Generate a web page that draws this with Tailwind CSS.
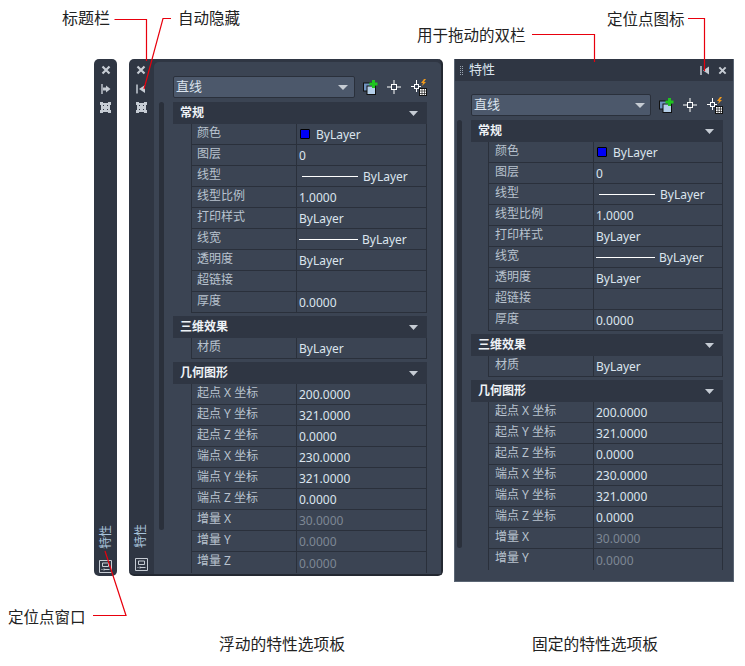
<!DOCTYPE html>
<html lang="zh">
<head>
<meta charset="utf-8">
<script src="https://cdn.jsdelivr.net/npm/@tailwindcss/browser@4"></script>
</head>
<body class="bg-white font-['Noto_Sans','Noto_Sans_CJK_SC',sans-serif]">
<div class="relative w-[745px] h-[666px] overflow-hidden">

<!-- callout labels -->
<div class="absolute left-[62px] top-[7px] text-[16px] leading-[22px] text-[#222]">标题栏</div>
<div class="absolute left-[178px] top-[7px] text-[15.5px] leading-[22px] text-[#222]">自动隐藏</div>
<div class="absolute left-[417px] top-[24px] text-[15.5px] leading-[22px] text-[#222]">用于拖动的双栏</div>
<div class="absolute left-[607px] top-[8px] text-[15.5px] leading-[22px] text-[#222]">定位点图标</div>
<div class="absolute left-[8px] top-[606px] text-[15.5px] leading-[22px] text-[#222]">定位点窗口</div>
<div class="absolute left-[219px] top-[633px] text-[15.75px] leading-[22px] text-[#222]">浮动的特性选项板</div>
<div class="absolute left-[532px] top-[633px] text-[15.75px] leading-[22px] text-[#222]">固定的特性选项板</div>

<!-- collapsed palette -->
<div class="absolute left-[94px] top-[59px] w-[23px] h-[517px] bg-[#2f3643] rounded-[5px] flex flex-col items-center pt-[6px] pb-[3px]">
  <svg class="w-[10px] h-[10px]" viewBox="0 0 10 10"><path d="M1.500 1.500l7 7M8.500 1.500l-7 7" stroke="#c6ccd4" stroke-width="2.200"/></svg>
  <svg class="w-[10px] h-[10px] mt-[9px]" viewBox="0 0 10 10"><path d="M1 0v10" stroke="#c6ccd4" stroke-width="1.400"/><path d="M2 3.500h3V1.500L9.500 5 5 8.500V6.500H2z" fill="#c6ccd4"/></svg>
  <svg class="w-[11px] h-[11px] mt-[8px]" viewBox="0 0 11 11"><path fill-rule="evenodd" d="M0 0h3v1h5V0h3v3h-1v5h1v3H8v-1H3v1H0V8h1V3H0zM3 3v1h1V3zM7 3v1h1V3zM3 7v1h1V7zM7 7v1h1V7z" fill="#c6ccd4"/></svg>
  <div class="flex-1"></div>
  <div class="[writing-mode:vertical-rl] [text-orientation:sideways] rotate-180 text-[12px] leading-[14px] text-[#a9c4dc]">特性</div>
  <svg class="w-[13px] h-[13px] mt-[11px]" viewBox="0 0 13 13"><path d="M.500.500h12v12H.500zM3.500 3h6v3.500h-6zM2.500 9.500h1M5 8.500v2M5 9.500h5.500" fill="none" stroke="#c6ccd4"/></svg>
</div>

<!-- floating palette -->
<div class="absolute left-[129px] top-[59px] w-[314px] h-[517px] bg-[#2f3643] rounded-[5px] flex border-r-2 border-b-2 border-[#232831]">
  <div class="w-[24px] flex flex-col items-center pt-[6px] pb-[3px] shrink-0">
    <svg class="w-[10px] h-[10px]" viewBox="0 0 10 10"><path d="M1.500 1.500l7 7M8.500 1.500l-7 7" stroke="#c6ccd4" stroke-width="2.200"/></svg>
    <svg class="w-[10px] h-[10px] mt-[9px]" viewBox="0 0 10 10"><path d="M1 .500v9" stroke="#c6ccd4" stroke-width="1.500"/><path d="M3 5l6-4v8z" fill="#c6ccd4"/></svg>
    <svg class="w-[11px] h-[11px] mt-[8px]" viewBox="0 0 11 11"><path fill-rule="evenodd" d="M0 0h3v1h5V0h3v3h-1v5h1v3H8v-1H3v1H0V8h1V3H0zM3 3v1h1V3zM7 3v1h1V3zM3 7v1h1V7zM7 7v1h1V7z" fill="#c6ccd4"/></svg>
    <div class="flex-1"></div>
    <div class="[writing-mode:vertical-rl] [text-orientation:sideways] rotate-180 text-[12px] leading-[14px] text-[#a9c4dc]">特性</div>
    <svg class="w-[13px] h-[13px] mt-[10px]" viewBox="0 0 13 13"><path d="M.500.500h12v12H.500zM3.500 3h6v3.500h-6zM2.500 9.500h1M5 8.500v2M5 9.500h5.500" fill="none" stroke="#c6ccd4"/></svg>
  </div>
  <div class="relative mt-[3px] ml-[1px] flex-1 min-w-0 bg-[#3b4453] rounded-tl-[5px] rounded-tr-[5px] pl-[19px] pt-[14px]">
    <div class="absolute left-[5px] top-[40px] w-[5px] h-[428px] rounded-[3px] bg-[#2a303b]"></div>
    <!-- toolbar -->
    <div class="flex items-center h-[22px] w-[258px]">
      <div class="w-[182px] h-[22px] bg-[#4c586b] border border-[#2a303b] rounded-[2px] flex items-center justify-between pl-[2px] pr-[6px] text-[13px] text-[#dbe4ee]">直线<svg class="w-[10px] h-[5px]" viewBox="0 0 10 5"><path d="M0 0h10L5 5z" fill="#c6ccd4"/></svg></div>
      <svg class="w-[15px] h-[15px] ml-[8px]" viewBox="0 0 15 15"><rect x=".5" y="3" width="9" height="8" fill="#6f93c0" stroke="#111"/><rect x="4" y="6" width="8.500" height="8.500" fill="#b5cfe9" stroke="#111"/><path d="M10.500 0v8M6.500 4h8" stroke="#1fc41f" stroke-width="3"/></svg>
      <svg class="w-[14px] h-[14px] ml-[9px]" viewBox="0 0 14 14"><path d="M7 0v5M7 9v5M0 7h5M9 7h5" stroke="#fff"/><rect x="4.500" y="4.500" width="5" height="5" fill="none" stroke="#fff"/></svg>
      <svg class="w-[17px] h-[17px] ml-[9px]" viewBox="0 0 17 17"><path d="M6.500 1v4M6.500 9v4M1 7.500h3M9 7.500h2" stroke="#fff"/><rect x="4.500" y="5.500" width="4" height="4" fill="none" stroke="#fff"/><path d="M14 0l-3 4h2l-1 3 4-4h-2l2-3z" fill="#f09a1e"/><rect x="9.500" y="9.500" width="7" height="7" fill="#fff" stroke="#111"/><path d="M10 12h6M10 14.500h6M12 10v7M14.500 10v7" stroke="#222" stroke-width=".7"/></svg>
    </div>
    <!-- sections -->
    <div class="w-[254px] mt-[4px] text-[12px] text-[#dbe4ee]">
      <div class="flex items-center justify-between h-[22px] bg-[#2f3643] pl-[7px] pr-[9px] font-bold text-[#eef2f6]">常规<svg class="w-[9px] h-[5px]" viewBox="0 0 9 5"><path d="M0 0h9L4.500 5z" fill="#c6ccd4"/></svg></div>
      <div class="flex h-[21px]"><div class="w-[18px]"></div><div class="w-[105px] border-l border-b border-[#2a303b] pl-[5px] leading-[18px] text-[#b9c3cf]">颜色</div><div class="flex-1 flex items-center border-x border-b border-[#2a303b] pl-[3px] pt-[2px]"><span class="w-[10px] h-[10px] -mt-[2px] bg-[#0000f5] border border-black rounded-[1px] mr-[6px]"></span>ByLayer</div></div>
      <div class="flex h-[21px]"><div class="w-[18px]"></div><div class="w-[105px] border-l border-b border-[#2a303b] pl-[5px] leading-[18px] text-[#b9c3cf]">图层</div><div class="flex-1 flex items-center border-x border-b border-[#2a303b] pl-[2px] pt-[2px]">0</div></div>
      <div class="flex h-[21px]"><div class="w-[18px]"></div><div class="w-[105px] border-l border-b border-[#2a303b] pl-[5px] leading-[18px] text-[#b9c3cf]">线型</div><div class="flex-1 flex items-center border-x border-b border-[#2a303b] pl-[5px] pt-[2px]"><span class="w-[56px] h-px -mt-[2px] bg-white mr-[5px]"></span>ByLayer</div></div>
      <div class="flex h-[21px]"><div class="w-[18px]"></div><div class="w-[105px] border-l border-b border-[#2a303b] pl-[5px] leading-[18px] text-[#b9c3cf]">线型比例</div><div class="flex-1 flex items-center border-x border-b border-[#2a303b] pl-[2px] pt-[2px]">1.0000</div></div>
      <div class="flex h-[21px]"><div class="w-[18px]"></div><div class="w-[105px] border-l border-b border-[#2a303b] pl-[5px] leading-[18px] text-[#b9c3cf]">打印样式</div><div class="flex-1 flex items-center border-x border-b border-[#2a303b] pl-[2px] pt-[2px]">ByLayer</div></div>
      <div class="flex h-[21px]"><div class="w-[18px]"></div><div class="w-[105px] border-l border-b border-[#2a303b] pl-[5px] leading-[18px] text-[#b9c3cf]">线宽</div><div class="flex-1 flex items-center border-x border-b border-[#2a303b] pl-[2px] pt-[2px]"><span class="w-[59px] h-px -mt-[2px] bg-white mr-[4px]"></span>ByLayer</div></div>
      <div class="flex h-[21px]"><div class="w-[18px]"></div><div class="w-[105px] border-l border-b border-[#2a303b] pl-[5px] leading-[18px] text-[#b9c3cf]">透明度</div><div class="flex-1 flex items-center border-x border-b border-[#2a303b] pl-[2px] pt-[2px]">ByLayer</div></div>
      <div class="flex h-[21px]"><div class="w-[18px]"></div><div class="w-[105px] border-l border-b border-[#2a303b] pl-[5px] leading-[18px] text-[#b9c3cf]">超链接</div><div class="flex-1 flex items-center border-x border-b border-[#2a303b] pl-[2px] pt-[2px]"></div></div>
      <div class="flex h-[21px]"><div class="w-[18px]"></div><div class="w-[105px] border-l border-b border-[#2a303b] pl-[5px] leading-[18px] text-[#b9c3cf]">厚度</div><div class="flex-1 flex items-center border-x border-b border-[#2a303b] pl-[2px] pt-[2px]">0.0000</div></div>

      <div class="flex items-center justify-between h-[22px] mt-[3px] bg-[#2f3643] pl-[7px] pr-[9px] font-bold text-[#eef2f6]">三维效果<svg class="w-[9px] h-[5px]" viewBox="0 0 9 5"><path d="M0 0h9L4.500 5z" fill="#c6ccd4"/></svg></div>
      <div class="flex h-[21px]"><div class="w-[18px]"></div><div class="w-[105px] border-l border-b border-[#2a303b] pl-[5px] leading-[18px] text-[#b9c3cf]">材质</div><div class="flex-1 flex items-center border-x border-b border-[#2a303b] pl-[2px] pt-[2px]">ByLayer</div></div>

      <div class="flex items-center justify-between h-[22px] mt-[3px] bg-[#2f3643] pl-[7px] pr-[9px] font-bold text-[#eef2f6]">几何图形<svg class="w-[9px] h-[5px]" viewBox="0 0 9 5"><path d="M0 0h9L4.500 5z" fill="#c6ccd4"/></svg></div>
      <div class="flex h-[21px]"><div class="w-[18px]"></div><div class="w-[105px] border-l border-b border-[#2a303b] pl-[5px] leading-[18px] text-[#b9c3cf]">起点 X 坐标</div><div class="flex-1 flex items-center border-x border-b border-[#2a303b] pl-[2px] pt-[2px]">200.0000</div></div>
      <div class="flex h-[21px]"><div class="w-[18px]"></div><div class="w-[105px] border-l border-b border-[#2a303b] pl-[5px] leading-[18px] text-[#b9c3cf]">起点 Y 坐标</div><div class="flex-1 flex items-center border-x border-b border-[#2a303b] pl-[2px] pt-[2px]">321.0000</div></div>
      <div class="flex h-[21px]"><div class="w-[18px]"></div><div class="w-[105px] border-l border-b border-[#2a303b] pl-[5px] leading-[18px] text-[#b9c3cf]">起点 Z 坐标</div><div class="flex-1 flex items-center border-x border-b border-[#2a303b] pl-[2px] pt-[2px]">0.0000</div></div>
      <div class="flex h-[21px]"><div class="w-[18px]"></div><div class="w-[105px] border-l border-b border-[#2a303b] pl-[5px] leading-[18px] text-[#b9c3cf]">端点 X 坐标</div><div class="flex-1 flex items-center border-x border-b border-[#2a303b] pl-[2px] pt-[2px]">230.0000</div></div>
      <div class="flex h-[21px]"><div class="w-[18px]"></div><div class="w-[105px] border-l border-b border-[#2a303b] pl-[5px] leading-[18px] text-[#b9c3cf]">端点 Y 坐标</div><div class="flex-1 flex items-center border-x border-b border-[#2a303b] pl-[2px] pt-[2px]">321.0000</div></div>
      <div class="flex h-[21px]"><div class="w-[18px]"></div><div class="w-[105px] border-l border-b border-[#2a303b] pl-[5px] leading-[18px] text-[#b9c3cf]">端点 Z 坐标</div><div class="flex-1 flex items-center border-x border-b border-[#2a303b] pl-[2px] pt-[2px]">0.0000</div></div>
      <div class="flex h-[21px]"><div class="w-[18px]"></div><div class="w-[105px] border-l border-b border-[#2a303b] pl-[5px] leading-[18px] text-[#b9c3cf]">增量 X</div><div class="flex-1 flex items-center border-x border-b border-[#2a303b] pl-[2px] pt-[2px] text-[#7d8794]">30.0000</div></div>
      <div class="flex h-[21px]"><div class="w-[18px]"></div><div class="w-[105px] border-l border-b border-[#2a303b] pl-[5px] leading-[18px] text-[#b9c3cf]">增量 Y</div><div class="flex-1 flex items-center border-x border-b border-[#2a303b] pl-[2px] pt-[2px] text-[#7d8794]">0.0000</div></div>
      <div class="flex h-[21px]"><div class="w-[18px]"></div><div class="w-[105px] border-l border-[#2a303b] pl-[5px] leading-[18px] text-[#b9c3cf]">增量 Z</div><div class="flex-1 flex items-center border-x border-[#2a303b] pl-[2px] pt-[2px] text-[#7d8794]">0.0000</div></div>
    </div>
  </div>
</div>

<!-- docked palette -->
<div class="absolute left-[454px] top-[59px] w-[280px] h-[523px] bg-[#3b4453] border-l border-r border-b border-[#5b6674] flex flex-col">
  <div class="h-[22px] bg-[#2f3643] flex items-center pl-[5px] pr-[6px] shrink-0">
    <div class="w-[3px] h-[9px] border-x border-dotted border-[#9aa4b0]"></div>
    <span class="ml-[6px] text-[13px] text-[#dbe4ee]">特性</span>
    <div class="flex-1"></div>
    <svg class="w-[9px] h-[9px]" viewBox="0 0 9 9"><path d="M1 0v9" stroke="#c6ccd4" stroke-width="1.500"/><path d="M3 4.500L9 .500v8z" fill="#c6ccd4"/></svg>
    <svg class="w-[9px] h-[9px] ml-[9px]" viewBox="0 0 10 10"><path d="M1.500 1.500l7 7M8.500 1.500l-7 7" stroke="#c6ccd4" stroke-width="2.200"/></svg>
  </div>
  <div class="relative flex-1 pl-[16px] pt-[13px]">
    <div class="absolute left-[2px] top-[39px] w-[5px] h-[428px] rounded-[3px] bg-[#2a303b]"></div>
    <div class="flex items-center h-[22px] w-[258px]">
      <div class="w-[180px] h-[22px] bg-[#4c586b] border border-[#2a303b] rounded-[2px] flex items-center justify-between pl-[2px] pr-[5px] text-[13px] text-[#dbe4ee]">直线<svg class="w-[10px] h-[5px]" viewBox="0 0 10 5"><path d="M0 0h10L5 5z" fill="#c6ccd4"/></svg></div>
      <svg class="w-[15px] h-[15px] ml-[8px]" viewBox="0 0 15 15"><rect x=".5" y="3" width="9" height="8" fill="#6f93c0" stroke="#111"/><rect x="4" y="6" width="8.500" height="8.500" fill="#b5cfe9" stroke="#111"/><path d="M10.500 0v8M6.500 4h8" stroke="#1fc41f" stroke-width="3"/></svg>
      <svg class="w-[14px] h-[14px] ml-[9px]" viewBox="0 0 14 14"><path d="M7 0v5M7 9v5M0 7h5M9 7h5" stroke="#fff"/><rect x="4.500" y="4.500" width="5" height="5" fill="none" stroke="#fff"/></svg>
      <svg class="w-[17px] h-[17px] ml-[9px]" viewBox="0 0 17 17"><path d="M6.500 1v4M6.500 9v4M1 7.500h3M9 7.500h2" stroke="#fff"/><rect x="4.500" y="5.500" width="4" height="4" fill="none" stroke="#fff"/><path d="M14 0l-3 4h2l-1 3 4-4h-2l2-3z" fill="#f09a1e"/><rect x="9.500" y="9.500" width="7" height="7" fill="#fff" stroke="#111"/><path d="M10 12h6M10 14.500h6M12 10v7M14.500 10v7" stroke="#222" stroke-width=".7"/></svg>
    </div>
    <div class="w-[252px] mt-[4px] text-[12px] text-[#dbe4ee]">
      <div class="flex items-center justify-between h-[22px] bg-[#2f3643] pl-[7px] pr-[9px] font-bold text-[#eef2f6]">常规<svg class="w-[9px] h-[5px]" viewBox="0 0 9 5"><path d="M0 0h9L4.500 5z" fill="#c6ccd4"/></svg></div>
      <div class="flex h-[21px]"><div class="w-[17px]"></div><div class="w-[105px] border-l border-b border-[#2a303b] pl-[6px] leading-[18px] text-[#b9c3cf]">颜色</div><div class="flex-1 flex items-center border-x border-b border-[#2a303b] pl-[3px] pt-[2px]"><span class="w-[10px] h-[10px] -mt-[2px] bg-[#0000f5] border border-black rounded-[1px] mr-[6px]"></span>ByLayer</div></div>
      <div class="flex h-[21px]"><div class="w-[17px]"></div><div class="w-[105px] border-l border-b border-[#2a303b] pl-[6px] leading-[18px] text-[#b9c3cf]">图层</div><div class="flex-1 flex items-center border-x border-b border-[#2a303b] pl-[2px] pt-[2px]">0</div></div>
      <div class="flex h-[21px]"><div class="w-[17px]"></div><div class="w-[105px] border-l border-b border-[#2a303b] pl-[6px] leading-[18px] text-[#b9c3cf]">线型</div><div class="flex-1 flex items-center border-x border-b border-[#2a303b] pl-[5px] pt-[2px]"><span class="w-[56px] h-px -mt-[2px] bg-white mr-[5px]"></span>ByLayer</div></div>
      <div class="flex h-[21px]"><div class="w-[17px]"></div><div class="w-[105px] border-l border-b border-[#2a303b] pl-[6px] leading-[18px] text-[#b9c3cf]">线型比例</div><div class="flex-1 flex items-center border-x border-b border-[#2a303b] pl-[2px] pt-[2px]">1.0000</div></div>
      <div class="flex h-[21px]"><div class="w-[17px]"></div><div class="w-[105px] border-l border-b border-[#2a303b] pl-[6px] leading-[18px] text-[#b9c3cf]">打印样式</div><div class="flex-1 flex items-center border-x border-b border-[#2a303b] pl-[2px] pt-[2px]">ByLayer</div></div>
      <div class="flex h-[21px]"><div class="w-[17px]"></div><div class="w-[105px] border-l border-b border-[#2a303b] pl-[6px] leading-[18px] text-[#b9c3cf]">线宽</div><div class="flex-1 flex items-center border-x border-b border-[#2a303b] pl-[2px] pt-[2px]"><span class="w-[59px] h-px -mt-[2px] bg-white mr-[4px]"></span>ByLayer</div></div>
      <div class="flex h-[21px]"><div class="w-[17px]"></div><div class="w-[105px] border-l border-b border-[#2a303b] pl-[6px] leading-[18px] text-[#b9c3cf]">透明度</div><div class="flex-1 flex items-center border-x border-b border-[#2a303b] pl-[2px] pt-[2px]">ByLayer</div></div>
      <div class="flex h-[21px]"><div class="w-[17px]"></div><div class="w-[105px] border-l border-b border-[#2a303b] pl-[6px] leading-[18px] text-[#b9c3cf]">超链接</div><div class="flex-1 flex items-center border-x border-b border-[#2a303b] pl-[2px] pt-[2px]"></div></div>
      <div class="flex h-[21px]"><div class="w-[17px]"></div><div class="w-[105px] border-l border-b border-[#2a303b] pl-[6px] leading-[18px] text-[#b9c3cf]">厚度</div><div class="flex-1 flex items-center border-x border-b border-[#2a303b] pl-[2px] pt-[2px]">0.0000</div></div>

      <div class="flex items-center justify-between h-[22px] mt-[3px] bg-[#2f3643] pl-[7px] pr-[9px] font-bold text-[#eef2f6]">三维效果<svg class="w-[9px] h-[5px]" viewBox="0 0 9 5"><path d="M0 0h9L4.500 5z" fill="#c6ccd4"/></svg></div>
      <div class="flex h-[21px]"><div class="w-[17px]"></div><div class="w-[105px] border-l border-b border-[#2a303b] pl-[6px] leading-[18px] text-[#b9c3cf]">材质</div><div class="flex-1 flex items-center border-x border-b border-[#2a303b] pl-[2px] pt-[2px]">ByLayer</div></div>

      <div class="flex items-center justify-between h-[22px] mt-[3px] bg-[#2f3643] pl-[7px] pr-[9px] font-bold text-[#eef2f6]">几何图形<svg class="w-[9px] h-[5px]" viewBox="0 0 9 5"><path d="M0 0h9L4.500 5z" fill="#c6ccd4"/></svg></div>
      <div class="flex h-[21px]"><div class="w-[17px]"></div><div class="w-[105px] border-l border-b border-[#2a303b] pl-[6px] leading-[18px] text-[#b9c3cf]">起点 X 坐标</div><div class="flex-1 flex items-center border-x border-b border-[#2a303b] pl-[2px] pt-[2px]">200.0000</div></div>
      <div class="flex h-[21px]"><div class="w-[17px]"></div><div class="w-[105px] border-l border-b border-[#2a303b] pl-[6px] leading-[18px] text-[#b9c3cf]">起点 Y 坐标</div><div class="flex-1 flex items-center border-x border-b border-[#2a303b] pl-[2px] pt-[2px]">321.0000</div></div>
      <div class="flex h-[21px]"><div class="w-[17px]"></div><div class="w-[105px] border-l border-b border-[#2a303b] pl-[6px] leading-[18px] text-[#b9c3cf]">起点 Z 坐标</div><div class="flex-1 flex items-center border-x border-b border-[#2a303b] pl-[2px] pt-[2px]">0.0000</div></div>
      <div class="flex h-[21px]"><div class="w-[17px]"></div><div class="w-[105px] border-l border-b border-[#2a303b] pl-[6px] leading-[18px] text-[#b9c3cf]">端点 X 坐标</div><div class="flex-1 flex items-center border-x border-b border-[#2a303b] pl-[2px] pt-[2px]">230.0000</div></div>
      <div class="flex h-[21px]"><div class="w-[17px]"></div><div class="w-[105px] border-l border-b border-[#2a303b] pl-[6px] leading-[18px] text-[#b9c3cf]">端点 Y 坐标</div><div class="flex-1 flex items-center border-x border-b border-[#2a303b] pl-[2px] pt-[2px]">321.0000</div></div>
      <div class="flex h-[21px]"><div class="w-[17px]"></div><div class="w-[105px] border-l border-b border-[#2a303b] pl-[6px] leading-[18px] text-[#b9c3cf]">端点 Z 坐标</div><div class="flex-1 flex items-center border-x border-b border-[#2a303b] pl-[2px] pt-[2px]">0.0000</div></div>
      <div class="flex h-[21px]"><div class="w-[17px]"></div><div class="w-[105px] border-l border-b border-[#2a303b] pl-[6px] leading-[18px] text-[#b9c3cf]">增量 X</div><div class="flex-1 flex items-center border-x border-b border-[#2a303b] pl-[2px] pt-[2px] text-[#7d8794]">30.0000</div></div>
      <div class="flex h-[21px]"><div class="w-[17px]"></div><div class="w-[105px] border-l border-[#2a303b] pl-[6px] leading-[18px] text-[#b9c3cf]">增量 Y</div><div class="flex-1 flex items-center border-x border-[#2a303b] pl-[2px] pt-[2px] text-[#7d8794]">0.0000</div></div>
    </div>
  </div>
</div>

<!-- leader lines -->
<svg class="absolute inset-0 pointer-events-none" width="745" height="666" viewBox="0 0 745 666" fill="none" stroke="#e8000d" stroke-width="1.200">
  <path d="M114.500 19.500H146.500V61"/>
  <path d="M171 18.500H163L144 89"/>
  <path d="M532 34.500H594.500V62"/>
  <path d="M688 18.500H704.500V71"/>
  <path d="M93 615.500H126L105 551"/>
</svg>
</div>
</body>
</html>
